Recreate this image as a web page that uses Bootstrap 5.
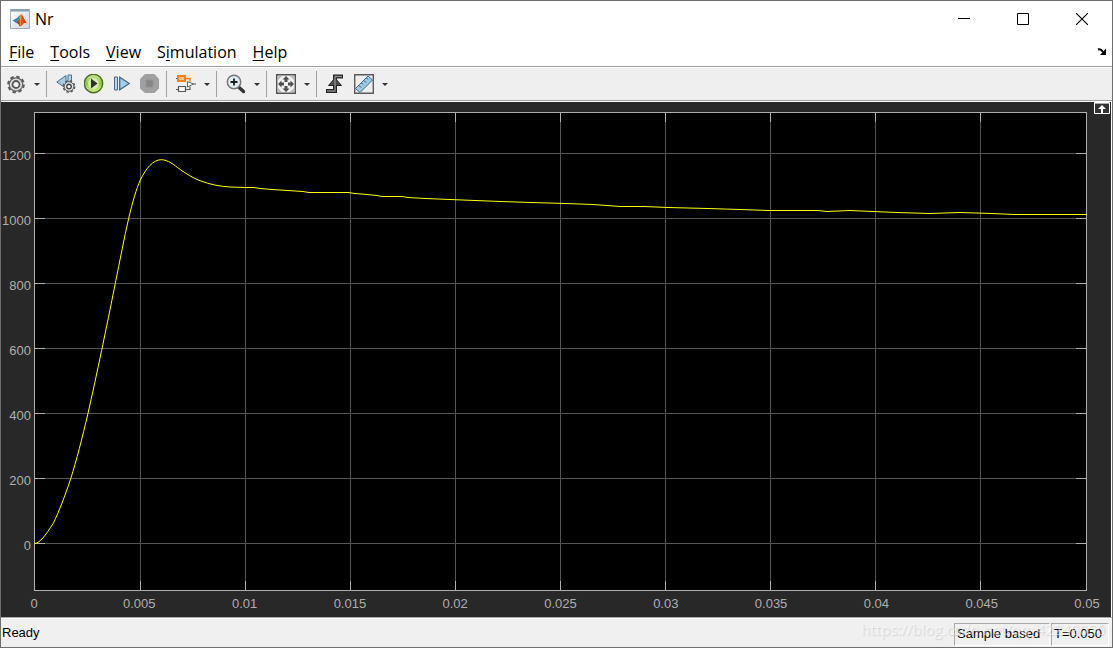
<!DOCTYPE html>
<html lang="en">
<head>
<meta charset="utf-8">
<meta name="viewport" content="width=device-width, initial-scale=1">
<title>Nr</title>
<link href="https://cdn.jsdelivr.net/npm/bootstrap@5.3.0/dist/css/bootstrap.min.css" rel="stylesheet">
<style>
  body { font-family: "Open Sans", "Noto Sans", sans-serif; font-size: 16px; line-height: 20px; color: #000; background: #fff; }
  .scope-window { border: 1px solid #6e6e6e; }
  button { border: 0; background: none; padding: 0; color: inherit; }
  svg { display: block; }

  .title-bar { height: 36px; padding: 0 1px 0 9px; gap: 5px; }
  .caption-group { display: flex; }
  .caption-btn { width: 59px; height: 36px; display: grid; place-items: center; }

  .menu-bar { height: 29px; padding: 0 5px 0 8px; gap: 16px; }
  .menu-bar a { color: #000; text-decoration: none; }
  .menu-bar u { text-underline-offset: 2px; }

  .tool-strip { height: 35px; background: #efefef; border-top: 1px solid #a0a0a0; border-bottom: 1px solid #a0a0a0; box-shadow: inset 0 1px #fff; padding: 1px 0 0 5px; }
  .tool-group { gap: 8px; height: 26px; padding-right: 6px; }
  .tool-group + .tool-group { border-left: 1px solid #a0a0a0; padding-left: 9px; }
  .tool-group.has-menu { padding-right: 0; }
  .caret-btn { width: 20px; height: 20px; padding-left: 2px; display: grid; place-items: center; }
  .tool-split { gap: 0; }

  .scope-area { background: #282828; border: solid #fff; border-width: 1px 1px 0 0; padding: 10px 24px 26px 33px; min-height: 240px; }
  .plot { width: 100%; height: 100%; overflow: visible; position: absolute; inset: 0; }
  .plot text { font: 13px "Liberation Sans", Arial, sans-serif; fill: #afafaf; }
  .restore-btn { top: 0; right: 1px; }

  .status-bar { height: 30px; background: #f0f0f0; border-top: 1px solid #a8a8a8; box-shadow: inset 0 1px #fff; padding: 5px 3px 2px 1px; gap: 1px; font: 13px/20px "Liberation Sans", Arial, sans-serif; }
  .status-cell { border: 1px solid; border-color: #a9a9a9 #fff #fff #a9a9a9; padding: 0 2px; height: 23px; }
  .cell-mode { width: 96px; }
  .cell-time { width: 58px; }
  .site-mark { right: 7px; bottom: 8px; font: 15px/20px "Open Sans", sans-serif; color: rgba(255,255,255,.5); text-shadow: 1px 1px 1px rgba(130,130,130,.25); pointer-events: none; }
</style>
</head>
<body>
<div class="scope-window vh-100 d-flex flex-column">
  <header class="title-bar d-flex align-items-center flex-shrink-0">
    <svg width="20" height="20" viewBox="0 0 20 20" aria-hidden="true">
      <defs>
        <linearGradient id="gFrame" x1="0" y1="0" x2="1" y2="1"><stop offset="0" stop-color="#fff"/><stop offset="1" stop-color="#cfd6dc"/></linearGradient>
        <linearGradient id="gPeak" x1="0" x2="1"><stop offset="0" stop-color="#6b1d12"/><stop offset=".45" stop-color="#e8571c"/><stop offset="1" stop-color="#c4301a"/></linearGradient>
      </defs>
      <rect x=".5" y=".5" width="19" height="19" fill="url(#gFrame)" stroke="#a3adb5"/>
      <path d="M1 1.500h18" stroke="#829cb0" stroke-width="2"/>
      <path d="M2.500 11.500 7 9l4-4-3 7-2 2z" fill="#3a86b8"/>
      <path d="M6 14c2-1 3.500-5 5.500-9.500 2 3 3 7 5.500 10-2-1-3.500-.5-5 2l-2.500 1C9 15.500 8 14 6 14z" fill="url(#gPeak)"/>
      <path d="M11.500 5c-1 3-1.500 6-1 11" stroke="#f7a338" fill="none"/>
    </svg>
    <span class="flex-grow-1">Nr</span>
    <div class="caption-group">
      <button class="caption-btn" aria-label="Minimize"><svg width="12" height="12"><path d="M0 5.500h12" stroke="#000"/></svg></button>
      <button class="caption-btn" aria-label="Maximize"><svg width="12" height="12"><path d="M.5.5h11v11H.5z" fill="none" stroke="#000"/></svg></button>
      <button class="caption-btn" aria-label="Close"><svg width="12" height="12"><path d="M0 0l12 12M12 0 0 12" stroke="#000" stroke-width="1.100"/></svg></button>
    </div>
  </header>

  <nav class="menu-bar d-flex align-items-center flex-shrink-0">
    <a href="#"><u>F</u>ile</a>
    <a href="#"><u>T</u>ools</a>
    <a href="#"><u>V</u>iew</a>
    <a href="#">S<u>i</u>mulation</a>
    <a href="#"><u>H</u>elp</a>
    <button class="ms-auto" aria-label="Undock"><svg width="10" height="8" viewBox="0 0 10 8"><path d="M1 1.500c2-.8 3.500 0 5 2.500" fill="none" stroke="#000" stroke-width="2"/><path d="M9 .5V7H3z"/></svg></button>
  </nav>

  <div class="tool-strip d-flex align-items-center flex-shrink-0" role="toolbar">
    <div class="tool-group tool-split has-menu d-flex align-items-center">
      <button aria-label="Configuration"><svg width="20" height="20" viewBox="0 0 20 20">
        <circle cx="10" cy="10.500" r="7.800" fill="none" stroke="#5c5c5c" stroke-width="2" stroke-dasharray="3.500 2.626"/>
        <circle cx="10" cy="10.500" r="6.700" fill="#dedede" stroke="#626262" stroke-width="1.200"/>
        <circle cx="10" cy="10.500" r="3.500" fill="#f4f4f4" stroke="#555" stroke-width="1.800"/></svg></button>
      <button class="caret-btn" aria-label="Configuration menu"><svg width="6" height="3"><path d="M0 0h6L3 3z" fill="#333"/></svg></button>
    </div>
    <div class="tool-group d-flex align-items-center">
      <button aria-label="Stepping options"><svg width="20" height="20" viewBox="0 0 20 20">
        <path d="M10 1.500v13L.8 8z" fill="#a9cbe2" stroke="#49708e"/><path d="M12 1h3.500v9H12z" fill="#b8d5e8" stroke="#49708e"/>
        <circle cx="13" cy="12.500" r="5.600" fill="none" stroke="#555" stroke-width="1.600" stroke-dasharray="2.400 1.998"/>
        <circle cx="13" cy="12.500" r="4.800" fill="#e2e2e2" stroke="#5b5b5b"/><circle cx="13" cy="12.500" r="2.200" fill="#fff" stroke="#444" stroke-width="1.400"/></svg></button>
      <button aria-label="Run"><svg width="20" height="20" viewBox="0 0 20 20">
        <defs><linearGradient id="gRun" x1="0" y1="0" x2="0" y2="1"><stop offset="0" stop-color="#cbe597"/><stop offset=".5" stop-color="#8fc93d"/><stop offset="1" stop-color="#d6f29a"/></linearGradient></defs>
        <circle cx="9.500" cy="9.500" r="9.200" fill="url(#gRun)" stroke="#4d6b24" stroke-width="1.400"/>
        <circle cx="9.500" cy="9.500" r="5.500" fill="#e9f6cf" opacity=".7"/><path d="M7 4.500v10l6.500-5z" fill="#2b3328"/></svg></button>
      <button aria-label="Step forward"><svg width="20" height="20" viewBox="0 0 20 20">
        <path d="M2.500 3h3v13h-3z" fill="#b4d5ea" stroke="#44698a"/><path d="M7.700 3.300v12.400l9.500-6.200z" fill="#a9cfe8" stroke="#44698a" stroke-width="1.300"/></svg></button>
      <button aria-label="Stop" disabled><svg width="20" height="20" viewBox="0 0 20 20">
        <path d="M5 0h9.500L19 5v9.500L14.500 19H5l-5-4.500V5z" fill="#a0a0a0"/><path d="M6 6h7v7H6z" fill="#868686" stroke="#929292"/></svg></button>
    </div>
    <div class="tool-group tool-split has-menu d-flex align-items-center">
      <button aria-label="Highlight block"><svg width="20" height="20" viewBox="0 0 20 20">
        <path d="M9 15.500h5v-3M0 4.500h2M0 15.500h2M17 10h3" fill="none" stroke="#555" stroke-width="1.200"/>
        <path d="M9 4.500h5v3" fill="none" stroke="#ef7d18" stroke-width="1.500"/>
        <path d="M2 2h7v5H2z" fill="#ffc17d" stroke="#f08020" stroke-width="2"/><path d="M2.500 12.500h7v5h-7z" fill="#f8f8f8" stroke="#555" stroke-width="1.200"/>
        <path d="M11.500 7.500 17.500 10l-6 3z" fill="#fff" stroke="#666"/></svg></button>
      <button class="caret-btn" aria-label="Highlight menu"><svg width="6" height="3"><path d="M0 0h6L3 3z" fill="#333"/></svg></button>
    </div>
    <div class="tool-group tool-split has-menu d-flex align-items-center">
      <button aria-label="Zoom"><svg width="20" height="20" viewBox="0 0 20 20">
        <path d="M12 12.500l5.500 5" stroke="#333" stroke-width="3.400" stroke-linecap="round"/>
        <circle cx="8" cy="8" r="6.700" fill="#dfeef2" stroke="#777" stroke-width="1.500"/><path d="M8 4.500v7M4.500 8h7" stroke="#1d1d1d" stroke-width="1.800"/></svg></button>
      <button class="caret-btn" aria-label="Zoom menu"><svg width="6" height="3"><path d="M0 0h6L3 3z" fill="#333"/></svg></button>
    </div>
    <div class="tool-group tool-split has-menu d-flex align-items-center">
      <button aria-label="Scale axes"><svg width="20" height="20" viewBox="0 0 20 20">
        <path d="M.7.7h18.600v18.600H.7z" fill="#f1f1f1" stroke="#505050" stroke-width="1.400"/>
        <path d="M2 2h4L2 6zM18 2h-4l4 4zM2 18h4l-4-4zM18 18h-4l4-4z" fill="#bbb"/>
        <path d="M10 2l3.500 3.500h-2V8h-3V5.500h-2zM10 18l3.500-3.500h-2V12h-3v2.500h-2zM2 10l3.500-3.500v2H8v3H5.500v2zM18 10l-3.500-3.500v2H12v3h2.500v2z" fill="#505050"/></svg></button>
      <button class="caret-btn" aria-label="Scale menu"><svg width="6" height="3"><path d="M0 0h6L3 3z" fill="#333"/></svg></button>
    </div>
    <div class="tool-group d-flex align-items-center">
      <button aria-label="Triggers"><svg width="20" height="20" viewBox="0 0 20 20">
        <path d="M0 17h9V2.500h8" fill="none" stroke="#222" stroke-width="4"/><path d="M9 4l6.500 7.500h-13z" fill="#4c4c4c" stroke="#222"/><path d="M1 17h8V2.500h7" fill="none" stroke="#8a8a8a" stroke-width="1.400"/></svg></button>
      <div class="d-flex align-items-center">
        <button aria-label="Measurements"><svg width="20" height="20" viewBox="0 0 20 20">
          <path d="M.7.7h18.600v18.600H.7z" fill="#eee" stroke="#5a5a5a" stroke-width="1.400"/>
          <path d="M1.500 14.500 14 2l4.500 4L6 18.500z" fill="#9ecbe3" stroke="#396d8e"/>
          <path d="M5 11.500l2 2M7.500 9l1.500 1.500M10 6.500l2 2M12.500 4 14 5.500" stroke="#245170"/></svg></button>
        <button class="caret-btn" aria-label="Measurements menu"><svg width="6" height="3"><path d="M0 0h6L3 3z" fill="#333"/></svg></button>
      </div>
    </div>
  </div>

  <main class="scope-area position-relative flex-grow-1 d-flex">
    <div class="position-relative flex-grow-1">
      <svg class="plot" role="img" aria-label="Nr against time">
        <svg width="100%" height="100%" viewBox="0 0 1053 479" preserveAspectRatio="none">
          <rect width="1053" height="479" fill="#000"/>
          <path d="M106.500 0v479M211.500 0v479M316.500 0v479M421.500 0v479M526.500 0v479M631.500 0v479M736.500 0v479M841.500 0v479M946.500 0v479M0 41.500h1053M0 106.500h1053M0 171.500h1053M0 236.500h1053M0 301.500h1053M0 366.500h1053M0 431.500h1053" stroke="#545454" shape-rendering="crispEdges"/>
          <path d="M106.500 0v10m0 459v10M211.500 0v10m0 459v10M316.500 0v10m0 459v10M421.500 0v10m0 459v10M526.500 0v10m0 459v10M631.500 0v10m0 459v10M736.500 0v10m0 459v10M841.500 0v10m0 459v10M946.500 0v10m0 459v10M0 41.500h11m1031 0h11M0 106.500h11m1031 0h11M0 171.500h11m1031 0h11M0 236.500h11m1031 0h11M0 301.500h11m1031 0h11M0 366.500h11m1031 0h11M0 431.500h11m1031 0h11" stroke="#afafaf" shape-rendering="crispEdges"/>
          <rect x=".5" y=".5" width="1052" height="478" fill="none" stroke="#afafaf" shape-rendering="crispEdges"/>
          <path fill="none" stroke="#ffff12" stroke-width="1" d="M.5 431.500C6 431 11 424 19.300 411.300C25 399.500 31 384 36.700 366.700C42.500 348.500 48.200 326 54 301.300C63 261.500 72.200 217 81.300 171.300C85.800 149 90.200 126 94.700 106.300C98.600 89.500 102.400 77 106.300 68C112 56.500 119 47.700 127.300 47.700C134 47.700 140 53 146 57.300C152.500 62 159 66 166 68.700C176 72.500 186 74.500 196 75L211 75.500 220 75.500 226 76.500 238 77.500 254 78.500 269 79.500 275 80.500 314 80.500 321 81.500 333 82.500 343 83.500 348 84.500 368 84.500 374 85.500 392 86.500 416 87.500 441 88.500 467 89.500 497 90.500 532 91.500 559 92.500 573 93.500 586 94.500 610 94.500 634 95.500 674 96.500 706 97.500 735 98.500 784 98.500 793 99.500 816 98.500 839 99.500 863 100.500 896 101.500 926 100.500 958 101.500 980 102.500 1053 102.500"/>
        </svg>
        <g text-anchor="end">
          <text y="8.600%" dx="-3" dy="7">1200</text>
          <text y="22.100%" dx="-3" dy="7">1000</text>
          <text y="35.700%" dx="-3" dy="7">800</text>
          <text y="49.300%" dx="-3" dy="7">600</text>
          <text y="62.900%" dx="-3" dy="7">400</text>
          <text y="76.400%" dx="-3" dy="7">200</text>
          <text y="90%" dx="-3" dy="7">0</text>
        </g>
        <g text-anchor="middle">
          <text x="0%" y="100%" dy="17">0</text>
          <text x="10%" y="100%" dy="17">0.005</text>
          <text x="20%" y="100%" dy="17">0.01</text>
          <text x="30%" y="100%" dy="17">0.015</text>
          <text x="40%" y="100%" dy="17">0.02</text>
          <text x="50%" y="100%" dy="17">0.025</text>
          <text x="60%" y="100%" dy="17">0.03</text>
          <text x="70%" y="100%" dy="17">0.035</text>
          <text x="80%" y="100%" dy="17">0.04</text>
          <text x="90%" y="100%" dy="17">0.045</text>
          <text x="100%" y="100%" dy="17">0.05</text>
        </g>
      </svg>
    </div>
    <button class="restore-btn position-absolute" aria-label="Maximize axes"><svg width="16" height="12" viewBox="0 0 16 12"><path d="M.5.5h15v11H.5z" fill="#333" stroke="#fff"/><path d="M1 1.500h14" stroke="#aaa"/><path d="M8 3l4 4H9v4H7V7H4z" fill="#fff"/></svg></button>
  </main>

  <footer class="status-bar d-flex flex-shrink-0 position-relative">
    <span class="flex-grow-1">Ready</span>
    <span class="status-cell cell-mode">Sample based</span>
    <span class="status-cell cell-time">T=0.050</span>
    <span class="site-mark position-absolute">https://blog.csdn.net/qq_42249050</span>
  </footer>
</div>
<script src="https://cdn.jsdelivr.net/npm/bootstrap@5.3.0/dist/js/bootstrap.bundle.min.js"></script>
</body>
</html>
